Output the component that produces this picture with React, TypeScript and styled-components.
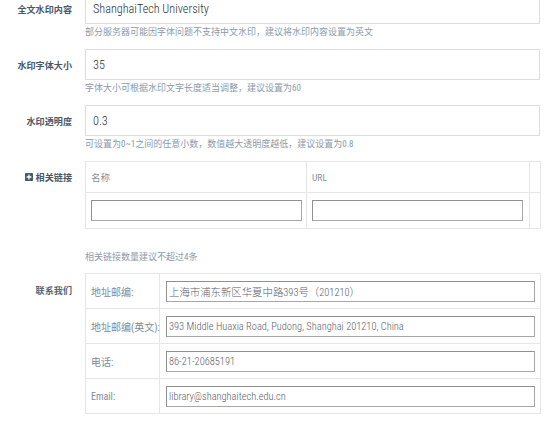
import React from "react";
import styled, { createGlobalStyle } from "styled-components";

const GlobalStyle = createGlobalStyle`
  html, body { margin: 0; padding: 0; background: #ffffff; }
  body {
    font-family: "Roboto Condensed", "Noto Sans CJK SC", sans-serif;
    overflow: hidden;
  }
  * { box-sizing: border-box; }
`;

const Page = styled.div`
  width: 553px;
  height: 425px;
  overflow: hidden;
`;

const Form = styled.div`
  display: flex;
  flex-direction: column;
  margin-top: -7px;
`;

const Row = styled.div<{ $gap?: number }>`
  display: grid;
  grid-template-columns: 72px 456px;
  column-gap: 13px;
  margin-bottom: ${(p) => p.$gap ?? 10}px;
`;

const Label = styled.div<{ $h?: number; $soft?: boolean }>`
  display: flex;
  align-items: center;
  justify-content: flex-end;
  gap: 3px;
  height: ${(p) => p.$h ?? 31}px;
  font-size: 9.1px;
  font-weight: 700;
  color: ${(p) => (p.$soft ? "#5b6878" : "#4b5868")};
  white-space: nowrap;
`;

const Field = styled.div`
  display: flex;
  flex-direction: column;
`;

const TextInput = styled.input`
  width: 455px;
  height: 31px;
  border: 1px solid #dcdcdc;
  padding: 0 7px;
  font-family: "Roboto Condensed", "Noto Sans CJK SC", sans-serif;
  font-size: 12.2px;
  font-weight: 300;
  color: #2c3036;
  background: #fff;
  outline: none;
`;

const Hint = styled.div<{ $mt?: number }>`
  margin-top: ${(p) => p.$mt ?? 1}px;
  height: 14px;
  line-height: 14px;
  font-size: 9px;
  color: #8c9aaa;
  white-space: nowrap;
`;

const Grid = styled.div<{ $cols: string }>`
  display: grid;
  grid-template-columns: ${(p) => p.$cols};
  border-top: 1px solid #e6e6e6;
  border-left: 1px solid #e6e6e6;
  width: 456px;
`;

const Cell = styled.div<{ $h: number; $pl?: number }>`
  display: flex;
  align-items: center;
  height: ${(p) => p.$h}px;
  padding-left: ${(p) => p.$pl ?? 5}px;
  border-right: 1px solid #e6e6e6;
  border-bottom: 1px solid #e6e6e6;
  font-size: 9.5px;
  color: #8a8f96;
  white-space: nowrap;
`;

const CellLabel = styled(Cell)`
  font-size: 10px;
  color: #7d8b9b;
`;

const BoxInput = styled.input<{ $w: number }>`
  width: ${(p) => p.$w}px;
  height: 21px;
  padding: 0 2px;
  border: 1px solid #a8a8a8;
  border-top-color: #909090;
  border-left-color: #909090;
  font-family: "Roboto Condensed", "Noto Sans CJK SC", sans-serif;
  font-size: 10.4px;
  font-weight: 300;
  color: #5a6067;
  background: #fff;
  outline: none;
`;

const PlusIcon = () => (
  <svg width="8" height="8" viewBox="0 0 8 8" aria-hidden="true">
    <rect x="0" y="0" width="8" height="8" rx="1" fill="#4b5868" />
    <path d="M4 1.6v4.8M1.6 4h4.8" stroke="#fff" strokeWidth="1.3" />
  </svg>
);

const contacts: [string, string][] = [
  ["地址邮编:", "上海市浦东新区华夏中路393号（201210）"],
  ["地址邮编(英文):", "393 Middle Huaxia Road, Pudong, Shanghai 201210, China"],
  ["电话:", "86-21-20685191"],
  ["Email:", "library@shanghaitech.edu.cn"],
];

export default function App() {
  return (
    <Page>
      <GlobalStyle />
      <Form>
        <Row>
          <Label>全文水印内容</Label>
          <Field>
            <TextInput readOnly defaultValue="ShanghaiTech University" />
            <Hint>部分服务器可能因字体问题不支持中文水印，建议将水印内容设置为英文</Hint>
          </Field>
        </Row>
        <Row>
          <Label>水印字体大小</Label>
          <Field>
            <TextInput readOnly defaultValue="35" />
            <Hint>字体大小可根据水印文字长度适当调整，建议设置为60</Hint>
          </Field>
        </Row>
        <Row>
          <Label>水印透明度</Label>
          <Field>
            <TextInput readOnly defaultValue="0.3" />
            <Hint>可设置为0~1之间的任意小数，数值越大透明度越低，建议设置为0.8</Hint>
          </Field>
        </Row>
        <Row $gap={9}>
          <Label>
            <PlusIcon />
            相关链接
          </Label>
          <Field>
            <Grid $cols="221px 223px 11px">
              <Cell $h={31}>名称</Cell>
              <Cell $h={31}>URL</Cell>
              <Cell $h={31} $pl={0} />
              <Cell $h={36}>
                <BoxInput $w={211} readOnly defaultValue="" />
              </Cell>
              <Cell $h={36}>
                <BoxInput $w={211} readOnly defaultValue="" />
              </Cell>
              <Cell $h={36} $pl={0} />
            </Grid>
            <Hint $mt={21}>相关链接数量建议不超过4条</Hint>
          </Field>
        </Row>
        <Row $gap={0}>
          <Label $h={34} $soft>联系我们</Label>
          <Field>
            <Grid $cols="74px 381px">
              {contacts.map(([k, v]) => (
                <React.Fragment key={k}>
                  <CellLabel $h={35}>{k}</CellLabel>
                  <Cell $h={35} $pl={6}>
                    <BoxInput $w={369} readOnly defaultValue={v} />
                  </Cell>
                </React.Fragment>
              ))}
            </Grid>
          </Field>
        </Row>
      </Form>
    </Page>
  );
}
